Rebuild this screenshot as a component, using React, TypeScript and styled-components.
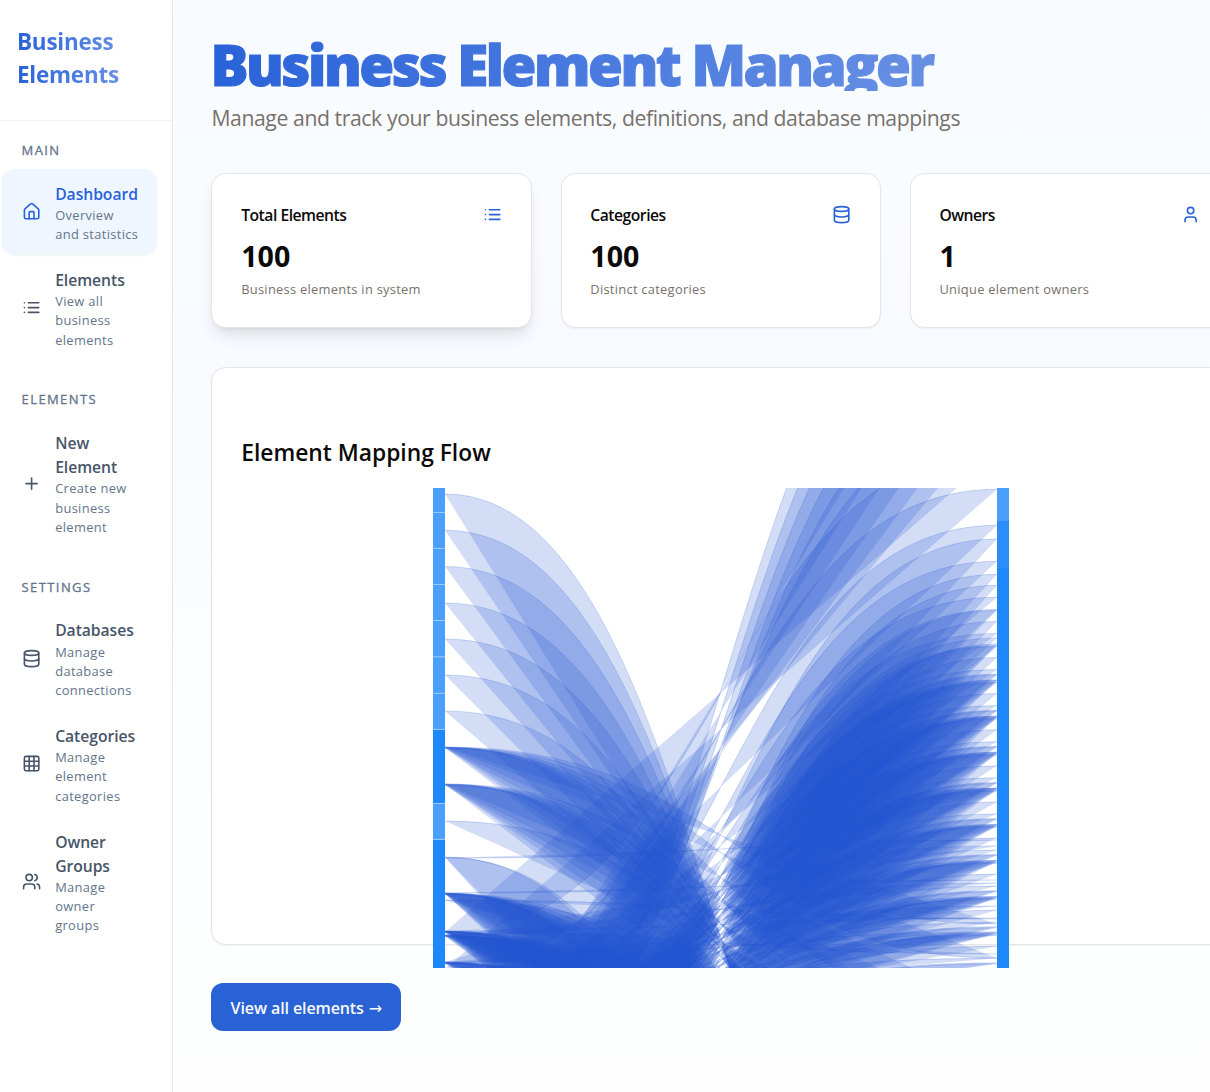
import React from "react";
import styled, { createGlobalStyle } from "styled-components";
import { Database, Grid3x3, House, Plus, User, Users } from "lucide-react";

const GlobalStyle = createGlobalStyle`
  * { box-sizing: border-box; }
  body {
    margin: 0;
    overflow: hidden;
    background: #fff;
    font-family: "Open Sans", "Noto Sans", sans-serif;
    color: #0c0a09;
  }
`;

const Page = styled.div`
  display: flex;
  height: 1092px;
  width: 1210px;
  overflow: hidden;
`;

const Sidebar = styled.aside`
  flex: 0 0 173px;
  min-width: 0;
  background: #fff;
  border-right: 1px solid #e5e7eb;
`;

const Brand = styled.div`
  height: 121px;
  padding: 25px 17px 0;
  border-bottom: 1px solid #f1f3f6;
`;

const BrandName = styled.div`
  font-size: 22.5px;
  line-height: 33.4px;
  font-weight: 700;
  letter-spacing: -0.25px;
  color: transparent;
  background: linear-gradient(90deg, #2962d9, #7d9fe8);
  background-clip: text;
  -webkit-background-clip: text;
`;

const Nav = styled.nav`
  display: flex;
  flex-direction: column;
  gap: 28.8px;
  padding: 19.2px 15px 0 2.4px;
`;

const SectionLabel = styled.div`
  height: 28.8px;
  padding: 0.6px 0 0 19.2px;
  font-size: 13px;
  line-height: 19.2px;
  font-weight: 500;
  letter-spacing: 1.4px;
  color: #64748b;
  -webkit-text-stroke: 0.3px #64748b;
`;

const Item = styled.div<{ $active?: boolean }>`
  display: flex;
  align-items: center;
  gap: 14.4px;
  padding: 12px 10px 12px 19.2px;
  border-radius: 13px;
  color: ${(p) => (p.$active ? "#2962d9" : "#475569")};
  background: ${(p) => (p.$active ? "#eff6ff" : "transparent")};
  box-shadow: ${(p) => (p.$active ? "0 1px 2px rgba(0,0,0,0.05)" : "none")};
  svg {
    flex: none;
    margin-top: -0.6px;
  }
`;

const ItemName = styled.div`
  padding-top: 0.6px;
  margin-bottom: -0.6px;
  font-size: 15.7px;
  line-height: 24px;
  font-weight: 600;
  letter-spacing: -0.05px;
`;

const ItemNote = styled.div<{ $width: number }>`
  width: ${(p) => p.$width}px;
  padding-top: 0.8px;
  margin-bottom: -0.8px;
  font-size: 12.9px;
  line-height: 19.2px;
  letter-spacing: 0.34px;
  color: #64748b;
`;

const Main = styled.main`
  flex: 1;
  min-width: 0;
  padding: 36px 0 0 38.4px;
  background: linear-gradient(180deg, #f7fbff 0, #f9fcff 160px, #f9faff 330px, #fcfdff 700px, #fdfefe 960px, #fefefe 1092px);
`;

const Content = styled.div`
  width: 1018.6px;
`;

const Title = styled.h1`
  width: 880px;
  height: 55px;
  margin: 0 0 0 -1px;
  font-size: 56.5px;
  line-height: 57px;
  font-weight: 800;
  letter-spacing: -2.5px;
  white-space: nowrap;
  color: transparent;
  -webkit-text-stroke: 1.2px transparent;
  background: linear-gradient(90deg, #2962d9, #7499e6);
  background-clip: text;
  -webkit-background-clip: text;
`;

const Subtitle = styled.p`
  margin: 10px 0 0;
  font-size: 21.2px;
  line-height: 34px;
  letter-spacing: -0.41px;
  white-space: nowrap;
  color: #78716c;
`;

const Stats = styled.div`
  display: grid;
  grid-template-columns: repeat(3, 1fr);
  gap: 28.8px;
  margin-top: 38px;
`;

const Card = styled.section<{ $raised?: boolean }>`
  height: 155px;
  padding: 27px 28.8px;
  background: #fff;
  border: 1px solid #e5e5e7;
  border-radius: 14.4px;
  box-shadow: ${(p) =>
    p.$raised
      ? "0 10px 15px -3px rgba(0,0,0,0.1), 0 4px 6px -4px rgba(0,0,0,0.1)"
      : "0 1px 2px rgba(0,0,0,0.05)"};
`;

const CardHead = styled.div`
  display: flex;
  align-items: center;
  justify-content: space-between;
  height: 27px;
  font-size: 15.7px;
  font-weight: 600;
  letter-spacing: -0.5px;
  color: #0c0a09;
  svg { color: #2962d9; }
`;

const Figure = styled.div`
  margin-top: 9px;
  font-size: 28.6px;
  line-height: 38px;
  font-weight: 700;
`;

const Caption = styled.div`
  margin-top: 5px;
  font-size: 12.9px;
  line-height: 19.2px;
  letter-spacing: 0.27px;
  color: #78716c;
`;

const FlowCard = styled.section`
  height: 578px;
  margin-top: 39px;
  padding: 67px 28.8px 0;
  background: #fff;
  border: 1px solid #e5e5e7;
  border-radius: 14.4px;
  box-shadow: 0 1px 2px rgba(0, 0, 0, 0.05);
`;

const FlowTitle = styled.h2`
  margin: 0;
  height: 53px;
  font-size: 22.8px;
  line-height: 36px;
  font-weight: 600;
`;

const Chart = styled.svg`
  display: block;
  margin: 0 auto;
  width: 576px;
  height: 480px;
  overflow: hidden;
`;

const Button = styled.button`
  display: flex;
  align-items: center;
  justify-content: center;
  gap: 5px;
  width: 190px;
  height: 48px;
  margin-top: 38px;
  padding: 2px 0 0;
  border: 0;
  border-radius: 12px;
  background: #2962d4;
  color: #f8fafc;
  font-family: inherit;
  font-size: 16px;
  font-weight: 600;
  letter-spacing: -0.1px;
`;

const Arrow = styled.span`
  font-family: "DejaVu Sans", sans-serif;
  font-size: 16px;
  font-weight: 400;
  letter-spacing: 0;
`;

const ListIcon = () => (
  <svg width="19.2" height="19.2" viewBox="0 0 24 24" fill="none" stroke="currentColor" strokeWidth="2" strokeLinecap="round" strokeLinejoin="round">
    <path d="M8 6h13M8 12h13M8 18h13M3 6h.01M3 12h.01M3 18h.01" />
  </svg>
);

const ICON = 19.2;

const sections = [
  {
    label: "MAIN",
    items: [
      { name: "Dashboard", note: "Overview and statistics", width: 84, icon: <House size={ICON} />, active: true },
      { name: "Elements", note: "View all business elements", width: 64, icon: <ListIcon /> },
    ],
  },
  {
    label: "ELEMENTS",
    items: [{ name: "New Element", note: "Create new business element", width: 76, icon: <Plus size={ICON} /> }],
  },
  {
    label: "SETTINGS",
    items: [
      { name: "Databases", note: "Manage database connections", width: 84, icon: <Database size={ICON} /> },
      { name: "Categories", note: "Manage element categories", width: 84, icon: <Grid3x3 size={ICON} /> },
      { name: "Owner Groups", note: "Manage owner groups", width: 60, icon: <Users size={ICON} /> },
    ],
  },
];

const stats = [
  { title: "Total Elements", value: "100", caption: "Business elements in system", icon: <ListIcon />, raised: true },
  { title: "Categories", value: "100", caption: "Distinct categories", icon: <Database size={ICON} /> },
  { title: "Owners", value: "1", caption: "Unique element owners", icon: <User size={ICON} /> },
];

type Link = [number, number];

/* Link endpoints: source offset on the left column, target offset on the right one. */
const links: Link[] = [
  [6, 898], [42.3, 857], [78.5, 829], [115, 800], [151, 763], [187, 739], [223, 698],
  [333, 582], [369, 990], [369.5, 930], [370, 352],
  [655, -251], [662, -215], [662, -179], [660, -143], [637, -107], [592, -71], [444, -35],
  [481, 1.3], [560, 37.3], [640, 51], [585, 73.3],
];

const fan = (source: number, targets: number[]) => targets.forEach((t, i) => links.push([source + (i % 4) * 0.45, t]));

fan(259, [436, 470, 520, 560, 612, 645, 674]);
fan(296, [530, 575, 610, 640, 680, 712]);
fan(405, [392, 640, 690, 735, 770, 802, 838, 868, 905, 926]);
fan(412, [431, 560]);
fan(443, [430, 466, 620, 655, 690, 720, 748, 779, 812, 842, 870, 905]);
fan(447, [395, 358, 640, 700, 730, 760, 800, 850, 880]);
fan(474, [300, 418, 444, 640, 665, 690, 730, 760, 780, 820, 860, 900]);

/* Each family of targets repeats once per source row. */
const families = [
  { first: 109.3, source: 575, step: -6 },
  { first: 86.3, source: 690, step: -15 },
  { first: 97.3, source: 715, step: -16 },
  { first: 121.5, source: 630, step: -11 },
  { first: 150, source: 655, step: -11 },
  { first: 156, source: 750, step: -20 },
  { first: 187, source: 670, step: -14 },
  { first: 192, source: 600, step: -11 },
  { first: 229, source: 760, step: -28 },
];
families.forEach(({ first, source, step }) => {
  for (let k = 0; first + k * 36.1 < 500; k++) {
    links.push([source + k * step, first + k * 36.1]);
  }
});

const linkPath = ([a, b]: Link) => `M12,${a}C288,${a} 288,${b} 564,${b}`;

const leftRows = [24.3, 60.3, 96.3, 132.4, 168.7, 205.2];

const FlowChart = () => (
  <Chart viewBox="0 0 576 480">
    <g fill="#2154d4" fillOpacity="0.2" stroke="#2154d4" strokeOpacity="0.2" strokeWidth="1">
      {links.map((l, i) => (
        <path key={i} d={linkPath(l)} />
      ))}
    </g>
    <rect x="0" y="0" width="12" height="480" fill="#1e87fa" />
    <rect x="0" y="0" width="12" height="241.5" fill="#4a9ffb" />
    <rect x="0" y="315" width="12" height="36.5" fill="#4a9ffb" />
    {[...leftRows, 241.3, 315.3, 351.3].map((y) => (
      <rect key={y} x="0" y={y - 0.4} width="12" height="1" fill="#a0cdfd" />
    ))}
    <rect x="564" y="0" width="12" height="480" fill="#1e87fa" />
    <rect x="564" y="33" width="12" height="47" fill="#2b8dfa" />
    <rect x="564" y="0" width="12" height="33" fill="#4a9ffb" />
  </Chart>
);

export default function App() {
  return (
    <Page>
      <GlobalStyle />
      <Sidebar>
        <Brand>
          <BrandName>Business Elements</BrandName>
        </Brand>
        <Nav>
          {sections.map((s) => (
            <div key={s.label}>
              <SectionLabel>{s.label}</SectionLabel>
              {s.items.map((it) => (
                <Item key={it.name} $active={"active" in it && it.active}>
                  {it.icon}
                  <div>
                    <ItemName>{it.name}</ItemName>
                    <ItemNote $width={it.width}>{it.note}</ItemNote>
                  </div>
                </Item>
              ))}
            </div>
          ))}
        </Nav>
      </Sidebar>
      <Main>
        <Content>
          <Title>Business Element Manager</Title>
          <Subtitle>Manage and track your business elements, definitions, and database mappings</Subtitle>
          <Stats>
            {stats.map((s) => (
              <Card key={s.title} $raised={s.raised}>
                <CardHead>
                  {s.title}
                  {s.icon}
                </CardHead>
                <Figure>{s.value}</Figure>
                <Caption>{s.caption}</Caption>
              </Card>
            ))}
          </Stats>
          <FlowCard>
            <FlowTitle>Element Mapping Flow</FlowTitle>
            <FlowChart />
          </FlowCard>
          <Button>
            View all elements <Arrow>→</Arrow>
          </Button>
        </Content>
      </Main>
    </Page>
  );
}
